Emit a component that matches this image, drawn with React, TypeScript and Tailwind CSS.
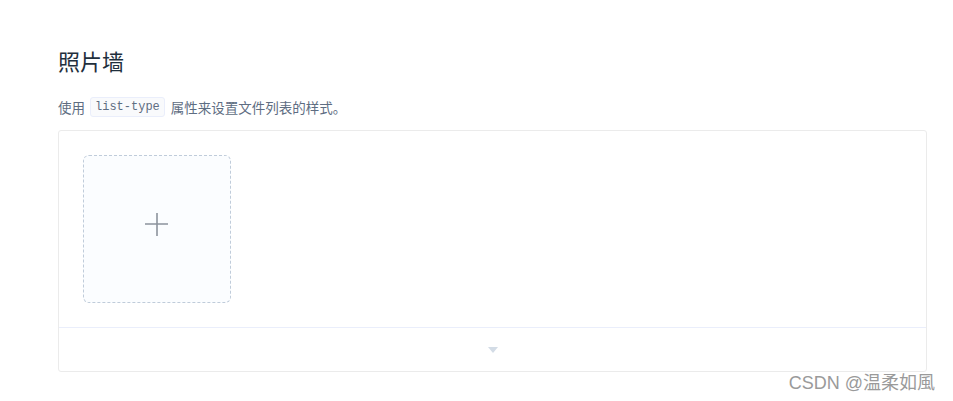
export default function App() {
  return (
    <div
      className="min-h-screen w-[953px] h-[401px] bg-white relative overflow-hidden"
      style={{ fontFamily: '"Noto Sans CJK SC", "Liberation Sans", sans-serif' }}
    >
      <div className="pl-[58px] pr-[26px] pt-[44px]">
        <h3 className="text-[22px] leading-[32px] font-normal text-[#1f2f3d]">照片墙</h3>
        <p className="mt-[20px] text-[13.5px] leading-[22px] text-[#5e6d82] flex items-center">
          使用
          <code
            className="ml-[5px] mr-[6px] px-[4px] text-[12px] leading-[18px] rounded-[3px] bg-[#f9fafc] border border-[#eaeefb] text-[#5e6d82]"
            style={{ fontFamily: '"Liberation Mono", monospace' }}
          >
            list-type
          </code>
          属性来设置文件列表的样式。
        </p>

        <div className="mt-[12px] border border-[#ebebeb] rounded-[3px]">
          <div className="p-[24px] h-[196px]">
            <div className="w-[148px] h-[148px] rounded-[6px] border border-dashed border-[#c0ccda] bg-[#fbfdff] flex items-center justify-center">
              <svg width="24" height="24" viewBox="0 0 24 24" className="mb-[10px]">
                <path d="M12 1V24M0 12H23" stroke="#8c939d" strokeWidth="1.6" />
              </svg>
            </div>
          </div>
          <div className="h-[44px] border-t border-[#eaeefb] flex items-center justify-center">
            <svg width="10" height="6" viewBox="0 0 10 6" className="mt-[1px]">
              <path d="M0 0H10L5 6Z" fill="#d3dce6" />
            </svg>
          </div>
        </div>
      </div>

      <div
        className="absolute right-[18px] bottom-[6px] text-[18px] leading-[24px] text-[#9a9a9a]"
        style={{ fontFamily: '"Liberation Sans", "Noto Sans CJK SC", sans-serif' }}
      >
        CSDN @温柔如風
      </div>
    </div>
  );
}
